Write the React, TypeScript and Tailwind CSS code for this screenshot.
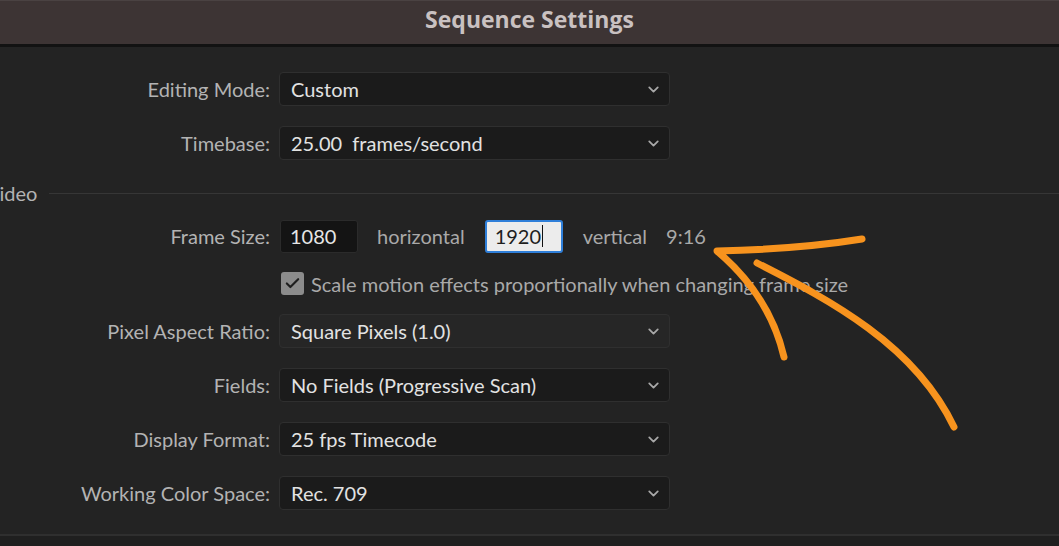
import { ChevronDown, Check } from 'lucide-react'

const font = { fontFamily: 'Lato, "Noto Sans", sans-serif' }

const Label = ({ children }: { children: string }) => (
  <div className="w-[270px] shrink-0 text-right text-[20px] text-[#b3b3b3]">{children}</div>
)

const Select = ({ value, light }: { value: string; light?: boolean }) => (
  <div
    className={`ml-[9px] flex h-[34px] w-[391px] items-center justify-between rounded-[4px] border border-[#2f2f2f] pl-[11px] pr-[7px] text-[20px] text-[#e2e2e2] ${
      light ? 'bg-[#262626]' : 'bg-[#1b1b1b]'
    }`}
  >
    <span className="whitespace-pre">{value}</span>
    <ChevronDown className="h-[17px] w-[17px] text-[#a8a8a8]" strokeWidth={2.5} />
  </div>
)

const Row = ({ label, value, light, className }: { label: string; value: string; light?: boolean; className: string }) => (
  <div className={`flex items-center ${className}`}>
    <Label>{label}</Label>
    <Select value={value} light={light} />
  </div>
)

export default function App() {
  return (
    <div className="relative h-[546px] w-[1059px] overflow-hidden bg-[#232323]" style={font}>
      <div className="flex h-[44px] items-center justify-center border-t border-[#4a4242] bg-[#3d3434] pb-[6px]">
        <span className="text-[23px] font-bold text-[#c9c1c1]" style={{ fontFamily: '"Open Sans", sans-serif' }}>
          Sequence Settings
        </span>
      </div>
      <div className="h-[3px] bg-[#121212]" />

      <div className="flex flex-col">
        <Row label="Editing Mode:" value="Custom" className="mt-[25px]" />
        <Row label="Timebase:" value="25.00  frames/second" className="mt-[20px]" />

        <div className="mt-[23px] flex h-[20px] items-center">
          <span className="ml-[-14px] text-[20px] text-[#b3b3b3]">Video</span>
          <div className="ml-[12px] h-px flex-1 bg-[#363636]" />
        </div>

        <div className="mt-[16px] flex h-[34px] items-center">
          <Label>Frame Size:</Label>
          <div className="ml-[10px] flex h-[33px] w-[78px] items-center rounded-[3px] border border-[#2b2b2b] bg-[#141414] pl-[9px] text-[20px] text-[#e6e6e6]">
            1080
          </div>
          <span className="ml-[19px] text-[20px] text-[#a9a9a9]">horizontal</span>
          <div className="ml-[20px] flex h-[33px] w-[78px] items-center rounded-[3px] border-2 border-[#2f7fd9] bg-[#ececec] pl-[8px] text-[20px] text-[#1e1e1e]">
            1920
            <span className="ml-px h-[22px] w-px bg-[#111]" />
          </div>
          <span className="ml-[20px] text-[20px] text-[#a9a9a9]">vertical</span>
          <span className="ml-[19px] text-[20px] text-[#a9a9a9]">9:16</span>
        </div>

        <div className="mt-[19px] flex h-[23px] items-center">
          <div className="ml-[281px] flex h-[23px] w-[23px] items-center justify-center rounded-[3px] bg-[#8c8c8c]">
            <Check className="h-[17px] w-[17px] text-[#1f1f1f]" strokeWidth={3} />
          </div>
          <span className="ml-[7px] text-[20px] text-[#a9a9a9]">Scale motion effects proportionally when changing frame size</span>
        </div>

        <Row label="Pixel Aspect Ratio:" value="Square Pixels (1.0)" light className="mt-[19px]" />
        <Row label="Fields:" value="No Fields (Progressive Scan)" className="mt-[20px]" />
        <Row label="Display Format:" value="25 fps Timecode" className="mt-[20px]" />
        <Row label="Working Color Space:" value="Rec. 709" className="mt-[20px]" />

        <div className="mt-[24px] h-[2px] bg-[#2f2f2f]" />
        <div className="h-[20px] bg-[#1f1f1f]" />
      </div>

      <svg className="pointer-events-none absolute inset-0" width="1059" height="546" viewBox="0 0 1059 546">
        <g fill="none" stroke="#f7931e" strokeWidth="7" strokeLinecap="round" strokeLinejoin="round">
          <path d="M862 239 Q800 249 717 251 Q770 296 784 357" />
          <path d="M757 263 C830 300 915 345 954 427" />
        </g>
      </svg>
    </div>
  )
}
